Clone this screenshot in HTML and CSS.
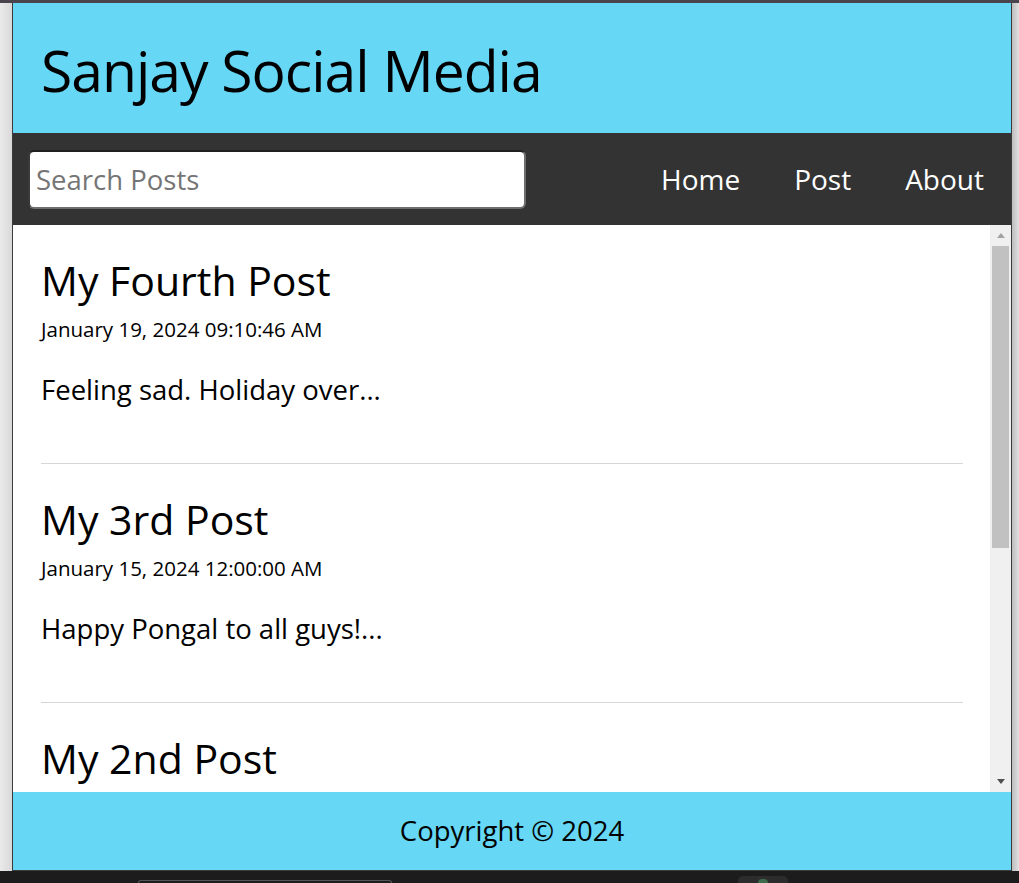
FILE: index.html
```html
<!DOCTYPE html>
<html lang="en">
<head>
<meta charset="utf-8">
<title>Sanjay Social Media</title>
<link rel="stylesheet" href="styles.css">
</head>
<body>
<div class="screen">
  <div class="topstrip"></div>
  <div class="middle">
    <div class="side side-left"></div>
    <div class="app">
      <header class="app-header">
        <h1 class="app-title">Sanjay Social Media</h1>
      </header>
      <nav class="app-nav">
        <form class="search-form" onsubmit="return false">
          <input class="search-input" type="text" placeholder="Search Posts">
        </form>
        <ul class="nav-links">
          <li><a href="#">Home</a></li>
          <li><a href="#">Post</a></li>
          <li><a href="#">About</a></li>
        </ul>
      </nav>
      <div class="feed-wrap">
        <main class="feed">
          <article class="post">
            <h2 class="post-title">My Fourth Post</h2>
            <p class="post-date">January 19, 2024 09:10:46 AM</p>
            <p class="post-body">Feeling sad. Holiday over...</p>
          </article>
          <article class="post">
            <h2 class="post-title">My 3rd Post</h2>
            <p class="post-date">January 15, 2024 12:00:00 AM</p>
            <p class="post-body">Happy Pongal to all guys!...</p>
          </article>
          <article class="post">
            <h2 class="post-title">My 2nd Post</h2>
            <p class="post-date">January 14, 2024 10:30:00 AM</p>
            <p class="post-body">Bhogi celebrations with family...</p>
          </article>
        </main>
        <div class="scrollbar" aria-hidden="true">
          <div class="sb-btn"><span class="sb-arrow sb-up"></span></div>
          <div class="sb-thumb"></div>
          <div class="sb-track"></div>
          <div class="sb-btn"><span class="sb-arrow sb-down"></span></div>
        </div>
      </div>
      <footer class="app-footer">
        <p>Copyright &copy; 2024</p>
      </footer>
    </div>
    <div class="side side-right"></div>
  </div>
  <div class="taskbar">
    <div class="task task-wide"></div>
    <div class="task task-icon"><span class="task-dot"></span></div>
  </div>
</div>
</body>
</html>
```
FILE: styles.css
```css
* { box-sizing: border-box; }

html, body {
  margin: 0;
  padding: 0;
}

body {
  width: 1019px;
  height: 883px;
  overflow: hidden;
  background: #1c1c1c;
  font-family: "Open Sans", "Noto Sans", sans-serif;
}

.screen {
  display: grid;
  grid-template-rows: 3px 868px 12px;
  height: 883px;
}

.topstrip {
  background: #4a454d;
}

.middle {
  display: grid;
  grid-template-columns: 12px 1000px 7px;
}

.side-left {
  background: linear-gradient(to right, #eaeaea, #d9d9d9);
}

.side-right {
  background: linear-gradient(to right, #bdbdbd, #e2e2e2);
}

.app {
  display: flex;
  flex-direction: column;
  border-left: 1px solid #3b3b3b;
  border-right: 1px solid #3b3b3b;
  border-bottom: 1px solid #3b3b3b;
  background: #fff;
  min-height: 0;
}

.app-header {
  height: 130px;
  flex: none;
  background: #66d7f5;
  display: flex;
  align-items: center;
  padding: 0 28px;
}

.app-title {
  margin: 0;
  font-size: 57px;
  letter-spacing: -1px;
  font-weight: 400;
  line-height: 78px;
  color: #000;
  position: relative;
  top: 2px;
}

.app-nav {
  height: 92px;
  flex: none;
  background: #333;
  display: flex;
  align-items: center;
  justify-content: space-between;
  padding: 0 27px 0 15px;
}

.search-form {
  margin: 0;
  display: flex;
}

.search-input {
  width: 498px;
  height: 59px;
  font-family: inherit;
  font-size: 27.5px;
  padding: 0 6px;
  border: 2px solid;
  border-color: #1f1f1f #6e6e6e #6e6e6e #3a3a3a;
  border-radius: 6px;
  background: #fff;
  color: #000;
  outline: none;
}

.search-input::placeholder {
  color: #757575;
}

.nav-links {
  list-style: none;
  margin: 0;
  padding: 0;
  display: flex;
  gap: 54px;
}

.nav-links a {
  color: #fff;
  text-decoration: none;
  font-size: 28px;
  line-height: 38px;
}

.feed-wrap {
  flex: 1;
  min-height: 0;
  display: flex;
}

.feed {
  flex: 1;
  min-width: 0;
  overflow: hidden;
  padding: 0 27px 0 28px;
}

.scrollbar {
  width: 21px;
  flex: none;
  display: flex;
  flex-direction: column;
  background: #f0f0f0;
}

.sb-btn {
  height: 21px;
  flex: none;
  display: flex;
  align-items: center;
  justify-content: center;
}

.sb-arrow {
  width: 0;
  height: 0;
  border-left: 4.5px solid transparent;
  border-right: 4.5px solid transparent;
}

.sb-up {
  border-bottom: 5px solid #a3a3a3;
}

.sb-down {
  border-top: 5px solid #505050;
}

.sb-thumb {
  height: 302px;
  flex: none;
  margin: 0 2px;
  background: #c1c1c1;
}

.sb-track {
  flex: 1;
}

.post {
  padding: 27px 0 54px;
  border-bottom: 1px solid #d6d6d6;
}

.post-title {
  margin: 0;
  font-size: 41px;
  font-weight: 400;
  line-height: 57px;
  color: #000;
}

.post-date {
  margin: 6px 0 0;
  font-size: 20.5px;
  line-height: 29px;
  color: #000;
}

.post-body {
  margin: 27px 0 0;
  font-size: 27.5px;
  line-height: 38px;
  color: #000;
}

.app-footer {
  height: 78px;
  flex: none;
  background: #66d7f5;
  display: flex;
  align-items: center;
  justify-content: center;
}

.app-footer p {
  margin: 0;
  font-size: 27.5px;
  line-height: 38px;
  color: #000;
}

.taskbar {
  display: flex;
  align-items: flex-end;
  background: #1c1c1c;
  padding-left: 138px;
  gap: 346px;
}

.task {
  border-radius: 5px 5px 0 0;
}

.task-wide {
  width: 254px;
  height: 3px;
  border: 1px solid #555;
  border-bottom: none;
}

.task-icon {
  width: 50px;
  height: 7px;
  background: #2c2c2c;
  display: flex;
  justify-content: center;
  align-items: flex-end;
}

.task-dot {
  width: 10px;
  height: 4px;
  border-radius: 5px 5px 0 0;
  background: #3d6b4a;
}
```
